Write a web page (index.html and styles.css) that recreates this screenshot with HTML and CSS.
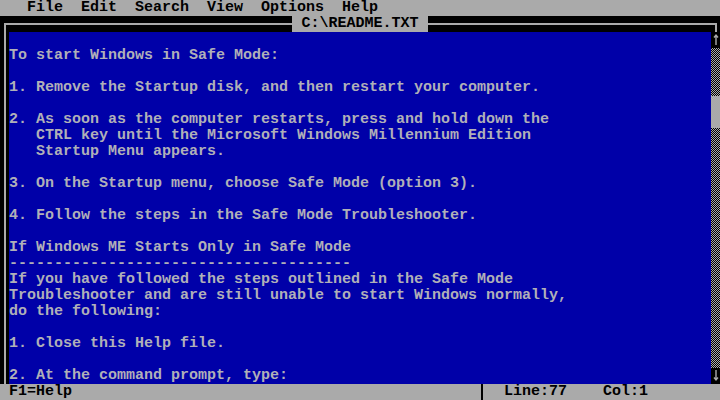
FILE: index.html
```html
<!DOCTYPE html>
<html>
<head>
<meta charset="utf-8">
<link rel="stylesheet" href="styles.css">
</head>
<body>
<div class="screen">
  <div class="menubar"><span class="menu">   File  Edit  Search  View  Options  Help</span></div>
  <div class="titlebar">
    <div class="corner-l"></div>
    <div class="hline"></div>
    <div class="title"> C:\README.TXT </div>
    <div class="hline"></div>
    <div class="corner-r"></div>
  </div>
  <div class="body">
    <div class="edge"></div>
    <pre class="text">

To start Windows in Safe Mode:

1. Remove the Startup disk, and then restart your computer.

2. As soon as the computer restarts, press and hold down the
   CTRL key until the Microsoft Windows Millennium Edition
   Startup Menu appears.

3. On the Startup menu, choose Safe Mode (option 3).

4. Follow the steps in the Safe Mode Troubleshooter.

If Windows ME Starts Only in Safe Mode
--------------------------------------
If you have followed the steps outlined in the Safe Mode
Troubleshooter and are still unable to start Windows normally,
do the following:

1. Close this Help file.

2. At the command prompt, type:</pre>
    <div class="scrollbar">
      <svg class="arrow" width="9" height="16" viewBox="0 0 9 16"><path d="M5 3v10M3 5.5L5 3l2 2.5" fill="none" stroke="#aaa" stroke-width="1.4"/></svg>
      <div class="track"><div class="thumb"></div></div>
      <svg class="arrow" width="9" height="16" viewBox="0 0 9 16"><path d="M5 2v10M3 9.5L5 12l2-2.5" fill="none" stroke="#aaa" stroke-width="1.4"/></svg>
    </div>
  </div>
  <div class="statusbar"><span> F1=Help                                             </span><span class="divider"></span><span>  Line:77    Col:1</span></div>
</div>
</body>
</html>
```
FILE: styles.css
```css
html, body {
  margin: 0;
  padding: 0;
  background: #000;
}
.screen {
  width: 720px;
  height: 400px;
  display: flex;
  flex-direction: column;
  font-family: "Liberation Mono", "DejaVu Sans Mono", monospace;
  font-size: 15px;
  font-weight: bold;
  line-height: 16px;
  overflow: hidden;
}
.menubar, .statusbar {
  height: 16px;
  background: #aaaaaa;
  color: #000;
  white-space: pre;
  display: flex;
}
.titlebar {
  height: 16px;
  background: #000;
  display: flex;
}
.corner-l {
  width: 9px;
  background:
    linear-gradient(#aaa, #aaa) 4px 7px / 5px 2px no-repeat,
    linear-gradient(#aaa, #aaa) 4px 7px / 2px 9px no-repeat;
}
.corner-r {
  width: 9px;
  background:
    linear-gradient(#aaa, #aaa) 0 7px / 6px 2px no-repeat,
    linear-gradient(#aaa, #aaa) 4px 7px / 2px 9px no-repeat;
}
.hline {
  flex: 1;
  background: linear-gradient(#aaa, #aaa) 0 7px / 100% 2px no-repeat;
}
.title {
  background: #aaaaaa;
  color: #000;
  white-space: pre;
}
.body {
  height: 352px;
  display: flex;
}
.edge {
  width: 9px;
  background: #000 linear-gradient(#aaa, #aaa) 4px 0 / 2px 100% no-repeat;
}
.text {
  margin: 0;
  width: 702px;
  background: #0000a8;
  color: #b0b0b8;
  font: inherit;
  line-height: 16px;
  white-space: pre;
  overflow: hidden;
}
.scrollbar {
  width: 9px;
  background: #000;
  display: flex;
  flex-direction: column;
}
.arrow {
  display: block;
  flex: none;
}
.track {
  flex: 1;
  position: relative;
  background-image: conic-gradient(#aaa 25%, #000 0 50%, #aaa 0 75%, #000 0);
  background-size: 2px 2px;
}
.thumb {
  position: absolute;
  left: 0;
  top: 48px;
  width: 9px;
  height: 32px;
  background: #aaaaaa;
}
.divider {
  width: 9px;
  background: linear-gradient(#000, #000) 4px 0 / 2px 100% no-repeat;
}
```
